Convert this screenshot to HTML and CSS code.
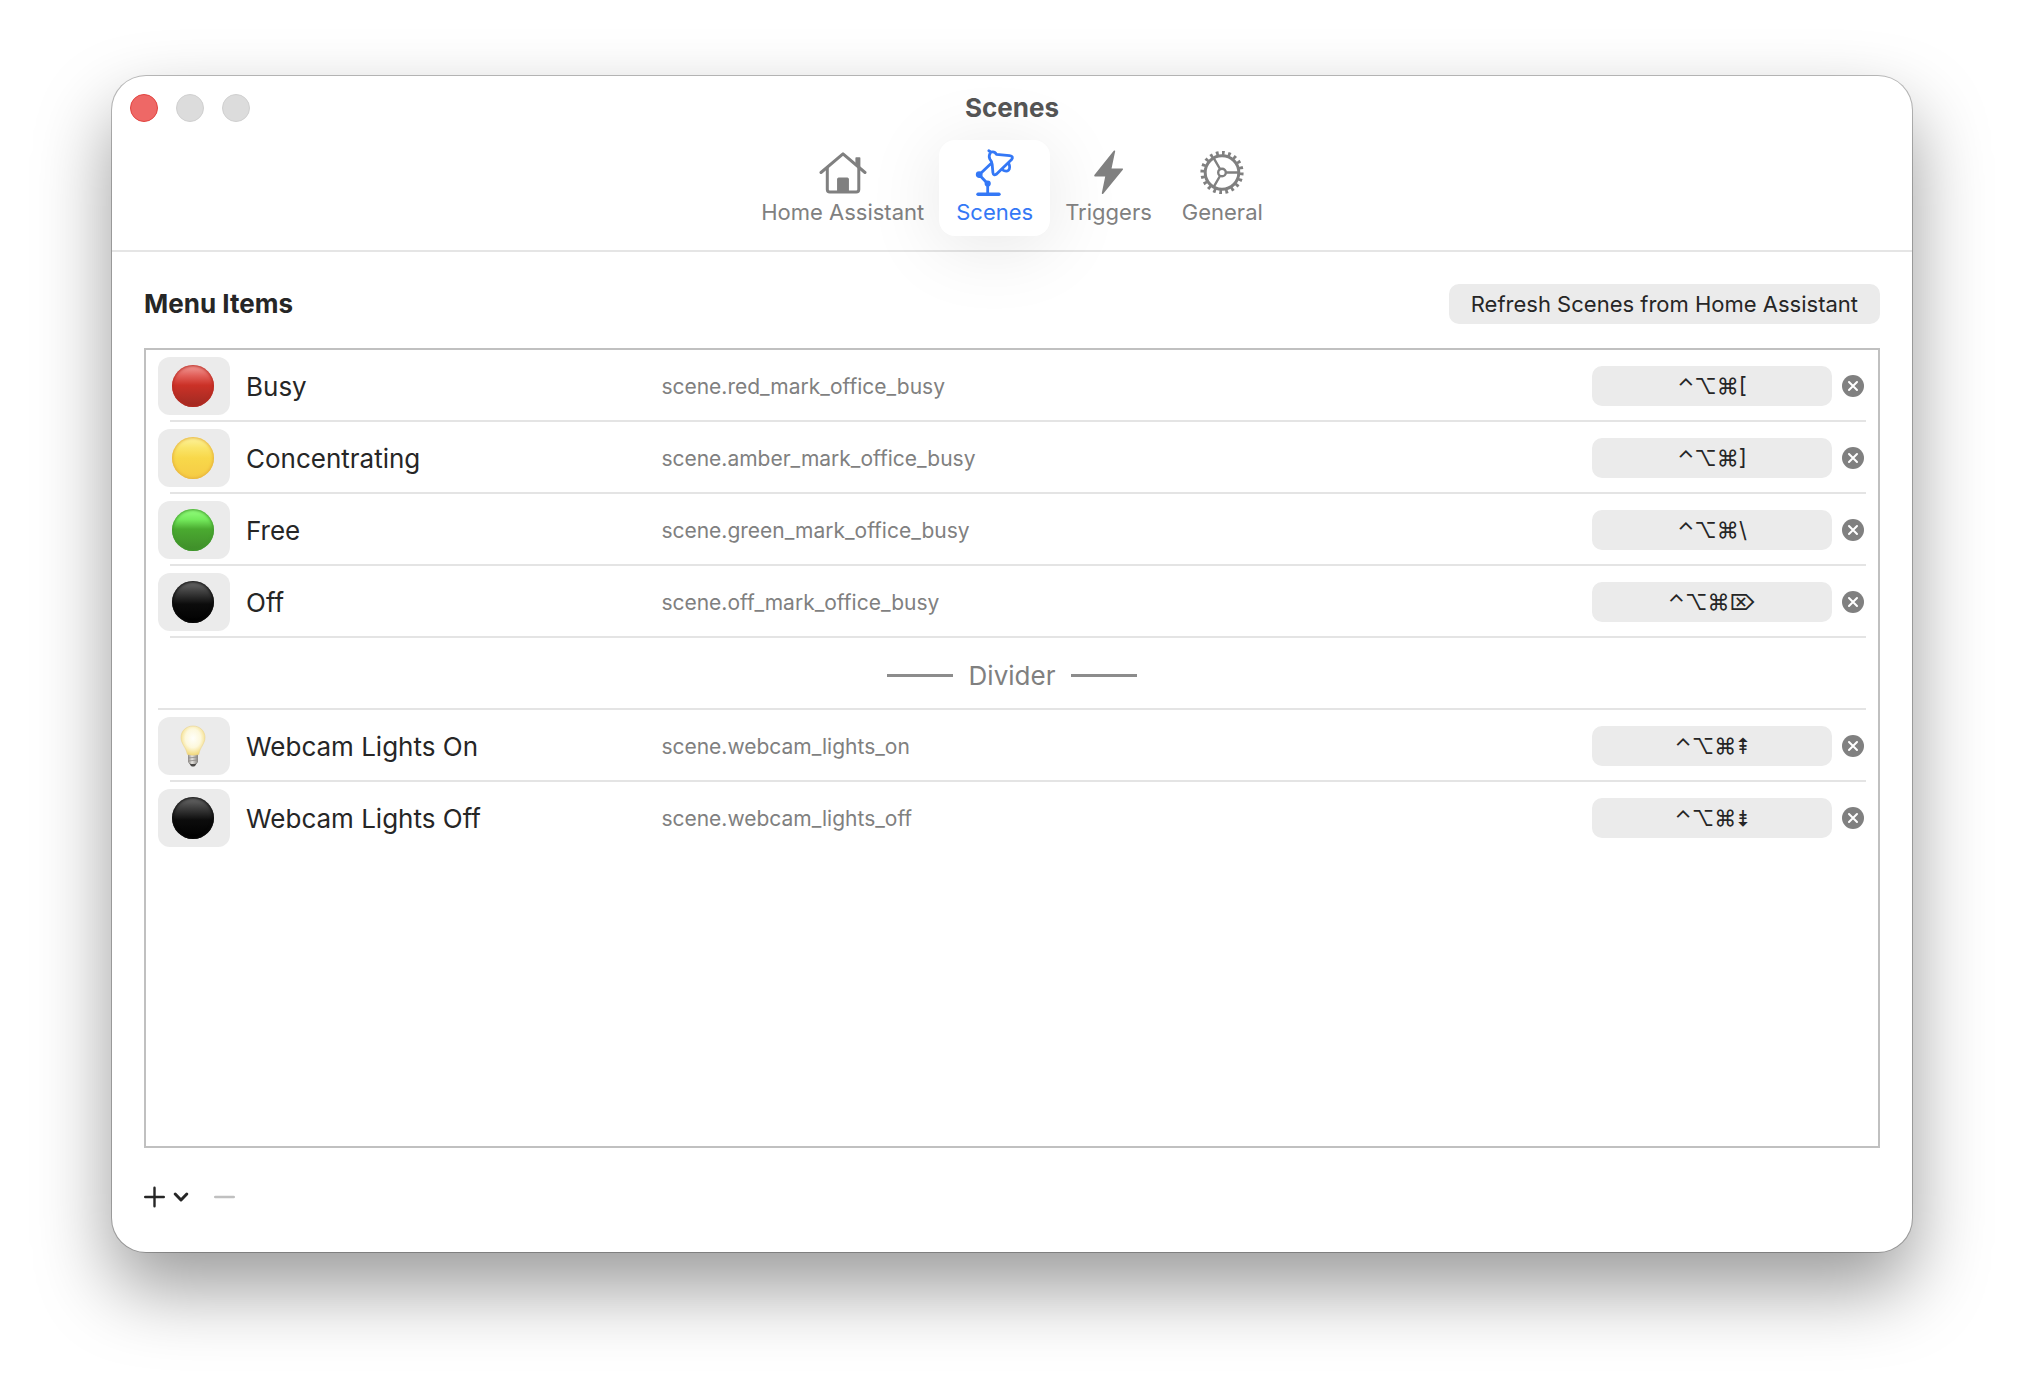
FILE: index.html
```html
<!DOCTYPE html>
<html lang="en">
<head>
    <meta charset="UTF-8">
    <meta name="viewport" content="width=device-width, initial-scale=1.0">
    <title>Scenes</title>
    <link rel="stylesheet" href="styles.css">
</head>
<body>
    <div class="window">
        <header class="toolbar">
            <div class="titlebar">
                <div class="lights">
                    <button class="light light-close" aria-label="Close"></button>
                    <button class="light" aria-label="Minimize" disabled></button>
                    <button class="light" aria-label="Zoom" disabled></button>
                </div>
                <h1>Scenes</h1>
            </div>
            <nav class="tabs">
                <button class="tab">
                    <svg viewBox="0 0 48 48" fill="none" stroke="currentColor" stroke-width="3" stroke-linecap="round" stroke-linejoin="round">
                        <path d="M2 24.5L24 5.8L46 24.5" />
                        <path d="M8.3 20V41.5Q8.3 44 10.8 44H37.2Q39.8 44 39.8 41.5V20" />
                        <path d="M37.2 16V10H40.6V19Z" fill="currentColor" stroke-width="1.6" />
                        <path d="M18.6 44V31Q18.6 30 19.6 30H28.4Q29.4 30 29.4 31V44Z" fill="currentColor" stroke-width="1" />
                    </svg>
                    <span>Home Assistant</span>
                </button>
                <button class="tab selected" aria-current="page">
                    <svg viewBox="0 0 48 48" fill="none" stroke="currentColor" stroke-width="2.8" stroke-linecap="round" stroke-linejoin="round">
                        <path d="M7 46.3H28" stroke-width="3.4" />
                        <path d="M16.7 46V35.7L8.2 26.7L19.8 15.8" />
                        <circle cx="8.2" cy="26.7" r="2" fill="currentColor" />
                        <circle cx="16.7" cy="35.5" r="1.7" fill="currentColor" />
                        <path d="M17.8 2.8L20 4.2Q23.6 3 25.4 6.3L38.5 7.6Q43 8.4 40.6 11.6L25.6 26Q22.4 28.2 21.9 24.6L21.2 16.6Q20.4 12.6 18.8 11Q17.4 8 19.4 4.6" />
                        <path d="M37.6 15.2C40.6 21.6 36.6 25.2 31 21.6" />
                    </svg>
                    <span>Scenes</span>
                </button>
                <button class="tab">
                    <svg viewBox="0 0 48 48" fill="currentColor" stroke="currentColor" stroke-width="1.6" stroke-linejoin="round">
                        <path d="M30.4 3.2L11 27.6H22.2L18.6 45.2L38.2 21.2H26.6Z" />
                    </svg>
                    <span>Triggers</span>
                </button>
                <button class="tab">
                    <svg viewBox="0 0 48 48" fill="none" stroke="currentColor" stroke-width="2.4">
                        <circle cx="24" cy="24.5" r="16.8" stroke-width="3" />
                        <circle cx="24" cy="24.5" r="19.6" stroke-width="4" pathLength="40" stroke-dasharray="0.9 1.1" />
                        <circle cx="24" cy="24.5" r="3.8" />
                        <path d="M28 24.5H40M22 21L16 10.6M22 28L16 38.4" />
                    </svg>
                    <span>General</span>
                </button>
            </nav>
        </header>

        <main class="content">
            <div class="heading">
                <h2>Menu Items</h2>
                <button class="push">Refresh Scenes from Home Assistant</button>
            </div>

            <ul class="list">
                <li class="row">
                    <button class="emoji" aria-label="Red circle"><span class="dot dot-red"></span></button>
                    <span class="name">Busy</span>
                    <span class="scene">scene.red_mark_office_busy</span>
                    <button class="push">⌃⌥⌘[</button>
                    <button class="clear" aria-label="Clear shortcut"><svg viewBox="0 0 22 22"><path d="M7 7L15 15M15 7L7 15" /></svg></button>
                </li>
                <li class="row">
                    <button class="emoji" aria-label="Yellow circle"><span class="dot dot-yellow"></span></button>
                    <span class="name">Concentrating</span>
                    <span class="scene">scene.amber_mark_office_busy</span>
                    <button class="push">⌃⌥⌘]</button>
                    <button class="clear" aria-label="Clear shortcut"><svg viewBox="0 0 22 22"><path d="M7 7L15 15M15 7L7 15" /></svg></button>
                </li>
                <li class="row">
                    <button class="emoji" aria-label="Green circle"><span class="dot dot-green"></span></button>
                    <span class="name">Free</span>
                    <span class="scene">scene.green_mark_office_busy</span>
                    <button class="push">⌃⌥⌘\</button>
                    <button class="clear" aria-label="Clear shortcut"><svg viewBox="0 0 22 22"><path d="M7 7L15 15M15 7L7 15" /></svg></button>
                </li>
                <li class="row">
                    <button class="emoji" aria-label="Black circle"><span class="dot dot-black"></span></button>
                    <span class="name">Off</span>
                    <span class="scene">scene.off_mark_office_busy</span>
                    <button class="push">⌃⌥⌘⌦</button>
                    <button class="clear" aria-label="Clear shortcut"><svg viewBox="0 0 22 22"><path d="M7 7L15 15M15 7L7 15" /></svg></button>
                </li>
                <li class="row divider">Divider</li>
                <li class="row">
                    <button class="emoji" aria-label="Light bulb">
                        <svg viewBox="0 0 42 42">
                            <defs>
                                <radialGradient id="glass" cx="50%" cy="42%" r="58%">
                                    <stop offset="0" stop-color="#fffffa" />
                                    <stop offset="0.55" stop-color="#fdf8dc" />
                                    <stop offset="1" stop-color="#f3d978" />
                                </radialGradient>
                                <linearGradient id="socket">
                                    <stop offset="0" stop-color="#8d8a86" />
                                    <stop offset="0.4" stop-color="#e6e4e0" />
                                    <stop offset="1" stop-color="#85827e" />
                                </linearGradient>
                            </defs>
                            <path d="M17 38H25L23 41Q21 42 19 41Z" fill="#4c4a48" />
                            <path d="M16 29H26V37Q25 39 21 39Q17 39 16 37Z" fill="url(#socket)" />
                            <path d="M16 33L26 32M16 36L26 35" stroke="#8f8c88" stroke-width="0.8" />
                            <path d="M21 1C28 1 33 6 33 12.5C33 19 28 22 26.8 29.5Q21 31 15.4 29.5C14 22 9 19 9 12.5C9 6 14 1 21 1Z" fill="url(#glass)" stroke="#ead392" stroke-width="0.6" />
                        </svg>
                    </button>
                    <span class="name">Webcam Lights On</span>
                    <span class="scene">scene.webcam_lights_on</span>
                    <button class="push">⌃⌥⌘⇞</button>
                    <button class="clear" aria-label="Clear shortcut"><svg viewBox="0 0 22 22"><path d="M7 7L15 15M15 7L7 15" /></svg></button>
                </li>
                <li class="row">
                    <button class="emoji" aria-label="Black circle"><span class="dot dot-black"></span></button>
                    <span class="name">Webcam Lights Off</span>
                    <span class="scene">scene.webcam_lights_off</span>
                    <button class="push">⌃⌥⌘⇟</button>
                    <button class="clear" aria-label="Clear shortcut"><svg viewBox="0 0 22 22"><path d="M7 7L15 15M15 7L7 15" /></svg></button>
                </li>
            </ul>

            <footer class="actions">
                <button aria-label="Add item">
                    <svg width="46" height="22" viewBox="0 0 46 22"><path d="M1.2 11H19.8M10.5 1.7V20.3" /><path d="M31.2 8L37 14L42.8 8" stroke-width="3" /></svg>
                </button>
                <button aria-label="Remove item" disabled>
                    <svg width="22" height="22" viewBox="0 0 22 22"><path d="M1.2 11H19.8" /></svg>
                </button>
            </footer>
        </main>
    </div>
</body>
</html>
```
FILE: styles.css
```css
* {
    box-sizing: border-box;
}
body {
    margin: 0;
    padding: 76px 112px 148px;
    min-height: 100vh;
    display: flex;
    background: #fff;
    color: #262626;
    font-family: Inter, "DejaVu Sans", sans-serif;
    font-size: 22px;
}
button {
    padding: 0;
    border: none;
    background: none;
    color: inherit;
    font: inherit;
}
svg {
    display: block;
}
h1, h2 {
    margin: 0;
    font-size: 26px;
    line-height: 30px;
    font-weight: 700;
}
.window {
    flex: 1;
    display: flex;
    flex-direction: column;
    background: #fff;
    border-radius: 34px;
    box-shadow: 0 0 0 1px rgba(0, 0, 0, 0.25), 0 36px 76px rgba(0, 0, 0, 0.4);
}

/* toolbar */
.toolbar {
    padding: 17px 18px 14px;
    border-bottom: 2px solid #e5e5e5;
}
.titlebar {
    display: grid;
    grid-template-columns: 1fr auto 1fr;
    align-items: center;
    margin-bottom: 17px;
}
.titlebar h1 {
    color: #555;
}
.lights {
    display: flex;
    gap: 18px;
}
.light {
    width: 28px;
    height: 28px;
    border-radius: 50%;
    border: 1px solid #d0d0d0;
    background: #dcdcdc;
}
.light-close {
    border-color: #e2433f;
    background: #ee6866;
}
.tabs {
    display: flex;
    justify-content: center;
}
.tab {
    display: flex;
    flex-direction: column;
    align-items: center;
    gap: 3px;
    padding: 8px 15px 11px;
    border-radius: 16px;
    line-height: 26px;
    color: #808080;
}
.tab svg {
    width: 48px;
    height: 48px;
}
.tab.selected {
    padding-left: 17px;
    padding-right: 17px;
    color: #3478f6;
    background: #fff;
    box-shadow: 0 10px 76px rgba(0, 0, 0, 0.1);
}

/* content */
.content {
    flex: 1;
    display: flex;
    flex-direction: column;
    padding: 32px 32px 44px;
}
.heading {
    display: flex;
    justify-content: space-between;
    align-items: center;
    margin-bottom: 24px;
}
.push {
    height: 40px;
    padding: 0 22px;
    border-radius: 10px;
    background: #ebebeb;
}
.list {
    flex: 1;
    margin: 0;
    padding: 0 12px;
    border: 2px solid #c0c0c0;
    list-style: none;
}
.row {
    display: grid;
    grid-template-columns: 72px 7fr 16fr 240px 22px;
    align-items: center;
    column-gap: 10px;
    height: 72px;
    padding-right: 2px;
    background: linear-gradient(#e4e4e4, #e4e4e4) no-repeat right bottom / calc(100% - 12px) 2px;
}
.row:last-child {
    background: none;
}
.emoji {
    display: grid;
    place-items: center;
    height: 58px;
    padding-right: 2px;
    border-radius: 12px;
    background: #ebebeb;
}
.emoji svg {
    width: 42px;
    height: 42px;
}
.dot {
    width: 42px;
    height: 42px;
    border-radius: 50%;
}
.dot-red {
    background: linear-gradient(#f2a09c, #e2605a 25%, #cb3127 48%, #9e2a22);
    box-shadow: inset 0 0 3px 1px #b8281f;
}
.dot-yellow {
    background: linear-gradient(#fdf3a0, #fae56a 25%, #f8d84a 50%, #f6cb45);
    box-shadow: inset 0 0 3px 1px #e5b03c;
}
.dot-green {
    background: linear-gradient(#96ff80, #74ea5c 25%, #4aaa30 48%, #3f8c2a);
    box-shadow: inset 0 0 3px 1px #3f9a2b;
}
.dot-black {
    background: linear-gradient(#6c6c6c, #404040 25%, #0c0c0c 55%, #000);
    box-shadow: inset 0 0 3px 1px #0a0a0a;
}
.name,
.scene {
    padding-left: 6px;
}
.name {
    font-size: 26px;
}
.scene {
    font-size: 21px;
    color: #808080;
}
.clear {
    width: 22px;
    height: 22px;
    border-radius: 50%;
    background: #808080;
}
.clear svg {
    fill: none;
    stroke: #fff;
    stroke-width: 2;
    stroke-linecap: round;
}
.divider {
    display: flex;
    justify-content: center;
    gap: 16px;
    padding: 2px 0 0;
    background-size: 100% 2px;
    font-size: 26px;
    color: #808080;
}
.divider::before,
.divider::after {
    content: "";
    width: 66px;
    height: 3px;
    background: #8c8c8c;
}

/* add / remove */
.actions {
    display: flex;
    gap: 24px;
    padding-top: 38px;
}
.actions svg {
    fill: none;
    stroke: currentColor;
    stroke-width: 2.4;
    stroke-linecap: round;
    stroke-linejoin: round;
}
.actions button:disabled {
    color: #c0c0c0;
}
```
